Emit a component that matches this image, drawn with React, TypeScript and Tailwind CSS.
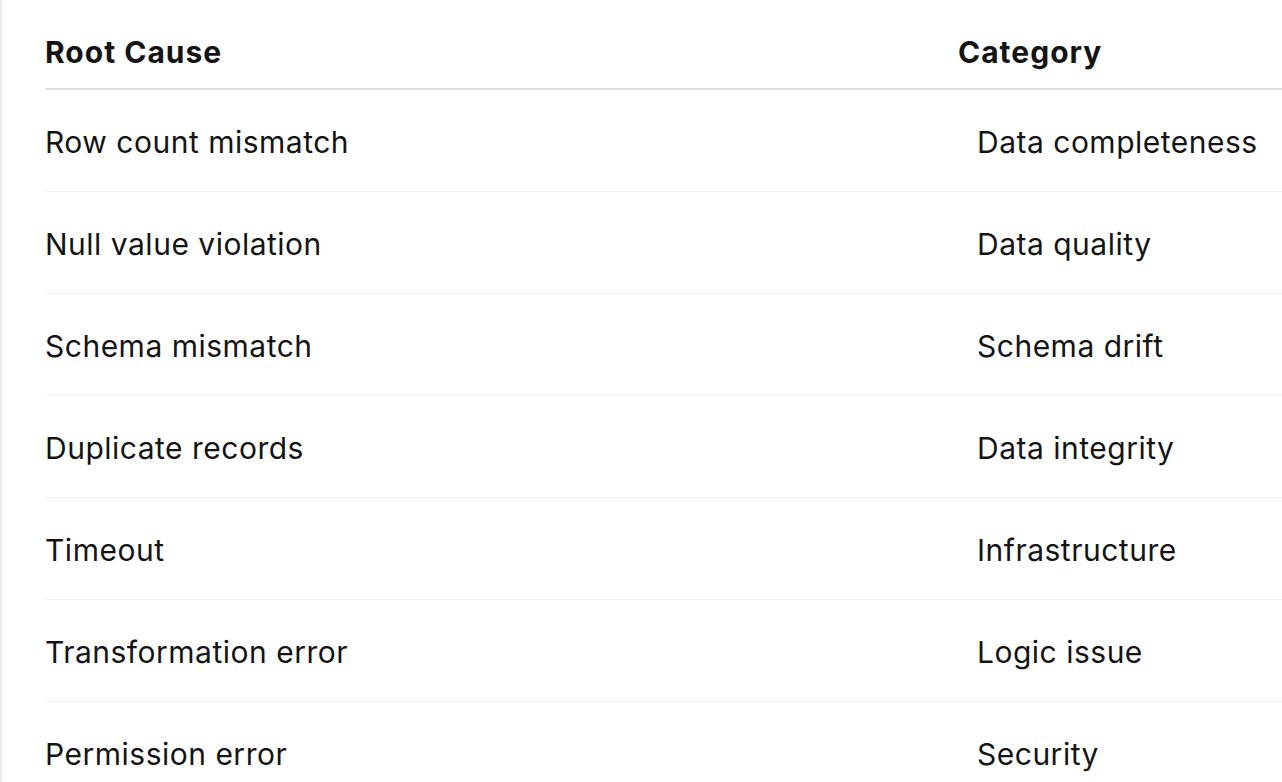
const rows = [
  { cause: "Row count mismatch", category: "Data completeness" },
  { cause: "Null value violation", category: "Data quality" },
  { cause: "Schema mismatch", category: "Schema drift" },
  { cause: "Duplicate records", category: "Data integrity" },
  { cause: "Timeout", category: "Infrastructure" },
  { cause: "Transformation error", category: "Logic issue" },
  { cause: "Permission error", category: "Security" },
];

const App = () => {
  return (
    <div
      className="h-[782px] w-[1282px] overflow-hidden bg-white text-[#141414]"
      style={{ fontFamily: "Inter, 'Noto Sans', sans-serif" }}
    >
      <div className="h-full border-l-2 border-[#ececec] pl-[43px]">
        <div className="w-[1300px]">
          <div className="flex border-b-2 border-[#dedede] pt-[34px] pb-[18px] text-[30px] leading-[36px] font-bold tracking-[1px]">
            <div className="w-[913px]">Root Cause</div>
            <div className="flex-1">Category</div>
          </div>
          {rows.map((row) => (
            <div
              key={row.cause}
              className="flex border-b border-[#f1f1f1] pt-[34px] pb-[31px] text-[30px] leading-[36px] tracking-[0.5px]"
            >
              <div className="w-[913px]">{row.cause}</div>
              <div className="flex-1 pl-[19px]">{row.category}</div>
            </div>
          ))}
        </div>
      </div>
    </div>
  );
};

export default App;
